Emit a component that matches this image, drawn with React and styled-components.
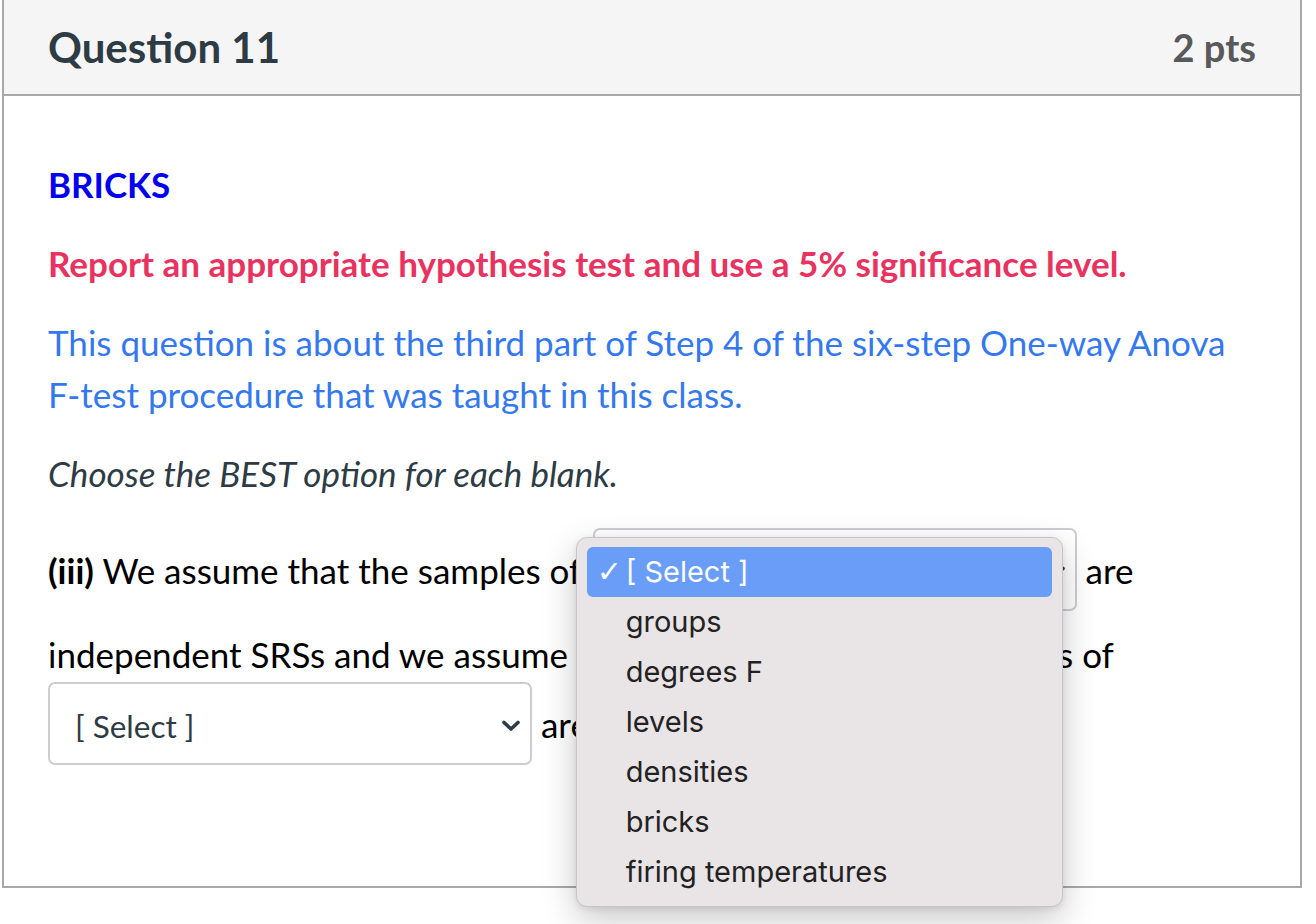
import React from 'react';
import styled, { createGlobalStyle } from 'styled-components';

const GlobalStyle = createGlobalStyle`
  html, body {
    margin: 0;
    padding: 0;
    background: #fff;
  }
  body {
    font-family: Lato, "Liberation Sans", sans-serif;
  }
`;

const Page = styled.div`
  box-sizing: border-box;
  min-height: 924px;
  padding: 0 14px 0 2px;
`;

const Card = styled.section`
  border: 2px solid #a9a9a9;
  border-top: none;
  background: #fff;
`;

const Header = styled.header`
  display: flex;
  justify-content: space-between;
  align-items: center;
  height: 94px;
  padding: 0 44px;
  background: #f5f5f5;
  border-bottom: 2px solid #a9a9a9;
`;

const Title = styled.h2`
  margin: 0;
  font-size: 42px;
  font-weight: 700;
  color: #2d3b45;
`;

const Points = styled.div`
  font-size: 38px;
  font-weight: 700;
  color: #58595b;
`;

const Body = styled.div`
  box-sizing: border-box;
  height: 790px;
  padding: 62px 44px 0;
  font-size: 35px;
  line-height: 52px;
`;

const Para = styled.p`
  margin: 0 0 27px;
  color: ${p => p.color || '#000'};
  font-weight: ${p => (p.bold ? 700 : 400)};
  font-style: ${p => (p.italic ? 'italic' : 'normal')};
`;

const Blank = styled.span`
  position: relative;
  display: inline-block;
  margin: 2px 0 17px ${p => (p.$inline ? '3px' : '0')};
`;

const SelectBox = styled.span`
  box-sizing: border-box;
  display: inline-flex;
  align-items: center;
  justify-content: space-between;
  width: 484px;
  height: 83px;
  padding: 4px 10px 0 25px;
  border: 2px solid #cbcdd0;
  border-radius: 7px;
  background: #fff;
  font-size: 31.5px;
  line-height: 40px;
  color: #2d3b45;
`;

const Chevron = () => (
  <svg width="18" height="12" viewBox="0 0 18 12">
    <path d="M2 2.5 L9 9 L16 2.5" fill="none" stroke="#2d3b45" strokeWidth="3.6" strokeLinecap="round" strokeLinejoin="round" />
  </svg>
);

const Popup = styled.div`
  position: absolute;
  left: -17px;
  top: 9px;
  z-index: 5;
  box-sizing: border-box;
  width: 487px;
  padding: 9px 10px;
  border: 1px solid #c9c5c7;
  border-radius: 11px;
  background: #e9e4e6;
  box-shadow: 0 12px 34px rgba(0, 0, 0, 0.22), 0 2px 6px rgba(0, 0, 0, 0.08);
  font-family: Inter, "Liberation Sans", sans-serif;
  font-size: 29px;
  line-height: 50px;
`;

const Option = styled.div`
  display: flex;
  height: 50px;
  border-radius: 6px;
  background: ${p => (p.active ? '#699df8' : 'transparent')};
  color: ${p => (p.active ? '#fff' : '#222')};
  white-space: nowrap;
`;

const Check = styled.span`
  width: 39px;
  padding-left: 10px;
  box-sizing: border-box;
  font-family: "DejaVu Sans", sans-serif;
  font-size: 30px;
  font-weight: 700;
`;

const options = ['[ Select ]', 'groups', 'degrees F', 'levels', 'densities', 'bricks', 'firing temperatures'];

function Select({ open }) {
  return (
    <Blank $inline={open}>
      <SelectBox>
        <span>[ Select ]</span>
        <Chevron />
      </SelectBox>
      {open && (
        <Popup>
          {options.map((o, i) => (
            <Option key={o} active={i === 0}>
              <Check>{i === 0 ? '✓' : ''}</Check>
              {o}
            </Option>
          ))}
        </Popup>
      )}
    </Blank>
  );
}

export default function App() {
  return (
    <Page>
      <GlobalStyle />
      <Card>
        <Header>
          <Title>Question 11</Title>
          <Points>2 pts</Points>
        </Header>
        <Body>
          <Para bold color="#0000f0">BRICKS</Para>
          <Para bold color="#e8325f">Report an appropriate hypothesis test and use a 5% significance level.</Para>
          <Para color="#3478f0">
            This question is about the third part of Step 4 of the six-step One-way Anova F-test procedure that was taught in this class.
          </Para>
          <Para italic color="#2d3b45">Choose the BEST option for each blank.</Para>
          <Para>
            <b>(iii)</b> We assume that the samples of <Select open /> are independent SRSs and we assume that the population distributions  of{' '}
            <Select /> are normally distributed.
          </Para>
        </Body>
      </Card>
    </Page>
  );
}
